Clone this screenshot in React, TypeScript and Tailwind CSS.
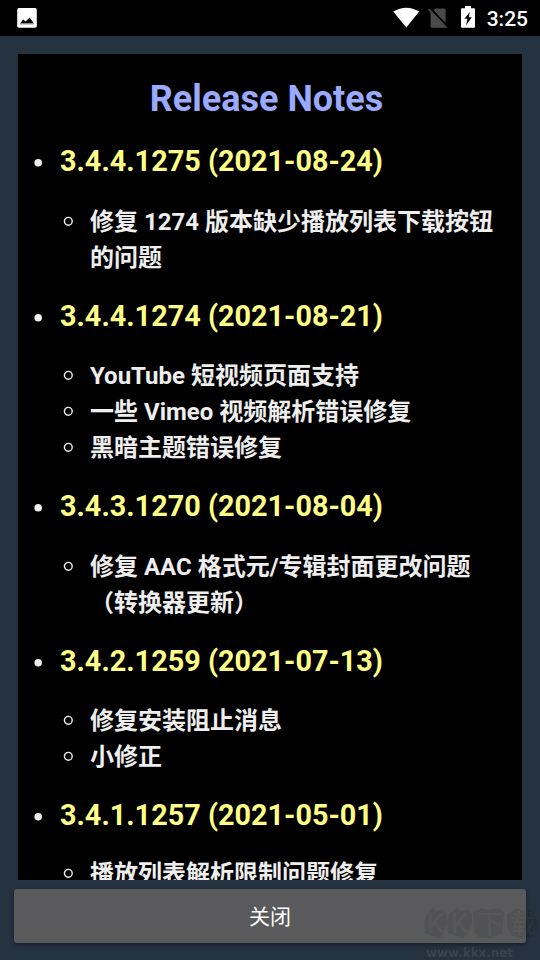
import type { ReactNode } from "react";

interface Release {
  version: string;
  date: string;
  notes: ReactNode[];
}

const releases: Release[] = [
  {
    version: "3.4.4.1275",
    date: "2021-08-24",
    notes: [
      <>
        修复 1274 版本缺少播放列表下载按钮
        <br />
        的问题
      </>,
    ],
  },
  {
    version: "3.4.4.1274",
    date: "2021-08-21",
    notes: ["YouTube 短视频页面支持", "一些 Vimeo 视频解析错误修复", "黑暗主题错误修复"],
  },
  {
    version: "3.4.3.1270",
    date: "2021-08-04",
    notes: [
      <>
        修复 AAC 格式元/专辑封面更改问题
        <br />
        （转换器更新）
      </>,
    ],
  },
  {
    version: "3.4.2.1259",
    date: "2021-07-13",
    notes: ["修复安装阻止消息", "小修正"],
  },
  {
    version: "3.4.1.1257",
    date: "2021-05-01",
    notes: ["播放列表解析限制问题修复"],
  },
];

function StatusBar() {
  return (
    <div className="flex h-9 shrink-0 items-center bg-black pl-[17px] pr-3 text-white">
      <svg width="20" height="20" viewBox="0 0 20 20">
        <rect x="0.2" y="0" width="19.6" height="19.8" rx="1.8" fill="#fff" />
        <path d="M3 15.6 6.2 11.4 8.6 13.6 12.6 9.6 17 15.6Z" fill="#000" />
        <path d="M3 16H17" stroke="#999" strokeWidth="1" />
      </svg>
      <div className="ml-auto flex items-center">
        <svg width="27" height="21" viewBox="0 0 27 21" className="-mt-px">
          <path d="M0.3 4.6Q13.3-3.2 26.2 4.6L13.3 20.4Z" fill="#fff" />
        </svg>
        <svg width="20" height="22" viewBox="0 0 20 22" className="ml-[8px]">
          <path
            d="M7 1.4H16.2Q17.6 1.4 17.6 2.8V19.4Q17.6 20.8 16.2 20.8H4Q2.6 20.8 2.6 19.4V5.8Z"
            fill="#4a4a4a"
          />
          <path d="M2 1 20 20" stroke="#000" strokeWidth="2" />
          <path d="M0.6 2 18.6 21" stroke="#4a4a4a" strokeWidth="1.8" />
        </svg>
        <svg width="14" height="22" viewBox="0 0 14 22" className="-mt-[2px] ml-[13px]">
          <path
            d="M4 0H10V2.2H13Q14 2.2 14 3.2V20.8Q14 21.8 13 21.8H1Q0 21.8 0 20.8V3.2Q0 2.2 1 2.2H4Z"
            fill="#fff"
          />
          <path d="M8.8 6 3.4 12.8H6.4L5.2 19.2 10.8 11.2H7.8Z" fill="#000" />
        </svg>
        <span className="ml-[12px] mt-[2px] text-[21px] leading-6 font-medium">3:25</span>
      </div>
    </div>
  );
}

function ReleaseItem({ release }: { release: Release }) {
  return (
    <li className="last:[&>ul]:mt-[22.5px]">
      <div className="flex items-center">
        <svg width="8" height="8" viewBox="0 0 8 8" className="ml-[16px] mt-[3px] shrink-0">
          <circle cx="4.2" cy="3.8" r="3.8" fill="#eee" />
        </svg>
        <h2 className="ml-[18px] text-[28.8px] leading-[35px] font-bold whitespace-nowrap text-[#ffff88]">
          {release.version} ({release.date})
        </h2>
      </div>
      <ul className="mt-[24.5px] mb-[23px]">
        {release.notes.map((note, i) => (
          <li key={i} className="flex">
            <svg width="10" height="10" viewBox="0 0 10 10" className="mt-[12px] ml-[45px] shrink-0">
              <circle cx="5.3" cy="5.3" r="3.9" fill="none" stroke="#eee" strokeWidth="1.4" />
            </svg>
            <span className="ml-[17px] text-2xl leading-9 font-bold whitespace-nowrap text-[#eee]">
              {note}
            </span>
          </li>
        ))}
      </ul>
    </li>
  );
}

function Watermark() {
  return (
    <svg
      width="118"
      height="58"
      viewBox="0 0 118 58"
      className="pointer-events-none absolute right-0 bottom-0"
    >
      <g fill="#000" fillOpacity="0.08" transform="translate(0 3)">
        <path d="M5 8 11 3 14 6 20 4 24 8 25 17 22 28 18 33 9 31 3 28 2 19Z" />
        <path d="M28 8 35 3 39 6 46 4 50 9 50 20 45 29 41 33 33 31 26 28 25 18Z" />
        <path d="M51 7 60 3 67 5 77 3 82 8 81 19 80 29 69 33 57 32 53 29Z" />
        <path d="M85 10 94 3 101 6 110 4 112 10 117 18 115 25 112 31 102 33 90 31 85 22Z" />
      </g>
      <g fill="#fff" fillOpacity="0.05">
        <text x="5" y="31" fontSize="28">K</text>
        <text x="29" y="31" fontSize="28">K</text>
        <text x="55" y="31" fontSize="26">下</text>
        <text x="88" y="31" fontSize="26">载</text>
      </g>
      <text
        x="4"
        y="55"
        fill="#6e6e6e"
        fillOpacity="0.3"
        fontSize="12"
        fontWeight="700"
        textLength="87"
        lengthAdjust="spacingAndGlyphs"
        fontFamily="DejaVu Sans, sans-serif"
      >
        www.kkx.net
      </text>
    </svg>
  );
}

export default function App() {
  return (
    <div className="relative flex h-[960px] w-[540px] flex-col overflow-hidden bg-[#25323f] font-['Roboto','Noto_Sans_CJK_SC',sans-serif]">
      <StatusBar />

      <main className="mx-[18px] mt-[18px] h-[826px] shrink-0 overflow-hidden bg-black">
        <h1 className="mt-[24px] pr-[7px] text-center text-4xl leading-[42px] font-bold text-[#99aaff]">
          Release Notes
        </h1>
        <ul className="mt-[24px]">
          {releases.map((r) => (
            <ReleaseItem key={r.version} release={r} />
          ))}
        </ul>
      </main>

      <button className="mx-[14px] mt-[9px] h-[54px] shrink-0 rounded-[3px] bg-[#5a5a5c] pt-[3px] text-[21px] text-white shadow-[0_2px_4px_rgba(0,0,0,0.35)]">
        关闭
      </button>

      <Watermark />
    </div>
  );
}
